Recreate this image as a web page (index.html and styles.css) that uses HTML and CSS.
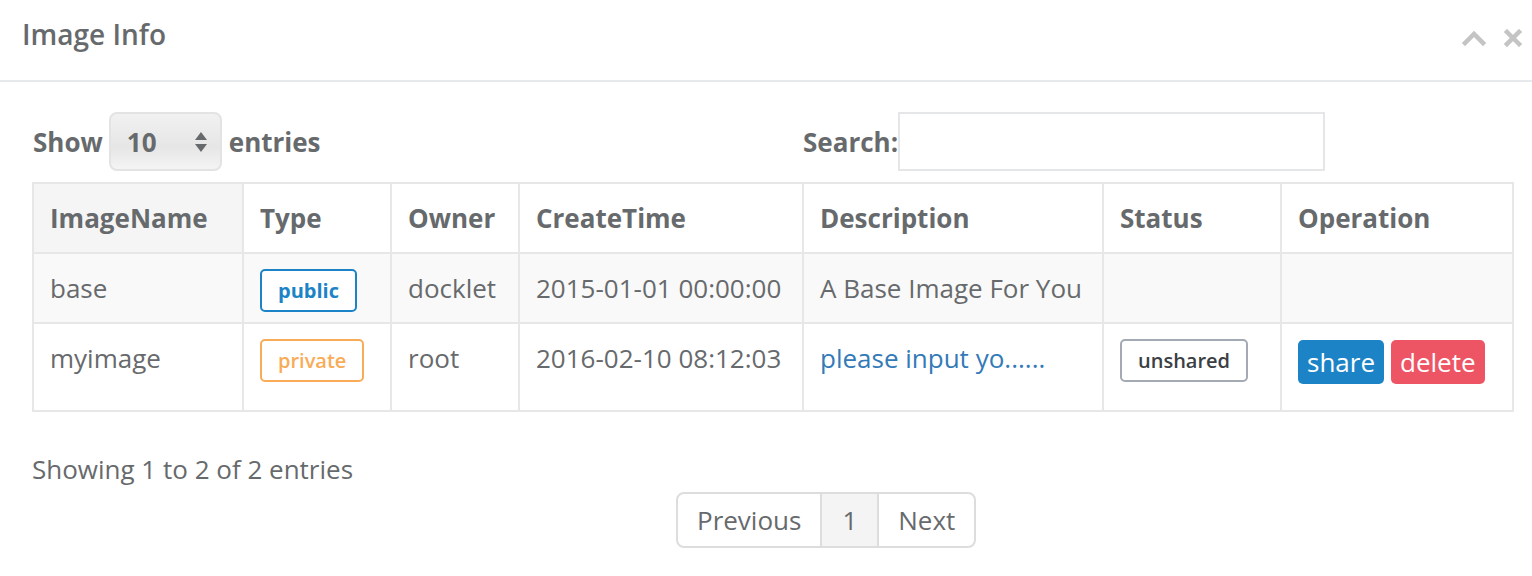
FILE: index.html
```html
<!DOCTYPE html>
<html>
<head>
<meta charset="utf-8">
<link rel="stylesheet" href="styles.css">
</head>
<body>
<div class="ibox">
  <div class="ibox-title">
    <h5>Image Info</h5>
    <div class="tools">
      <svg class="ico" width="24" height="16" viewBox="0 0 24 16"><path d="M3 13 L12 4 L21 13" fill="none" stroke="#c4c4c4" stroke-width="4.5" stroke-linecap="square"/></svg>
      <svg class="ico" width="18" height="18" viewBox="0 0 18 18"><path d="M3 3 L15 15 M15 3 L3 15" fill="none" stroke="#c4c4c4" stroke-width="4.5" stroke-linecap="square"/></svg>
    </div>
  </div>
  <div class="ibox-content">
    <div class="controls">
      <div class="length">
        <span class="lbl">Show</span>
        <div class="select"><span>10</span>
          <svg width="14" height="22" viewBox="0 0 14 22"><path d="M7 1 L13 9 L1 9 Z M7 21 L13 13 L1 13 Z" fill="#676a6c"/></svg>
        </div>
        <span class="lbl">entries</span>
      </div>
      <div class="filter">
        <span class="lbl">Search:</span>
        <div class="input"></div>
      </div>
    </div>
    <table>
      <colgroup>
        <col style="width:210px"><col style="width:148px"><col style="width:128px"><col style="width:284px"><col style="width:300px"><col style="width:178px"><col style="width:232px">
      </colgroup>
      <thead>
        <tr><th class="sorted">ImageName</th><th>Type</th><th>Owner</th><th>CreateTime</th><th>Description</th><th>Status</th><th>Operation</th></tr>
      </thead>
      <tbody>
        <tr class="odd"><td>base</td><td><span class="label l-public">public</span></td><td>docklet</td><td>2015-01-01 00:00:00</td><td>A Base Image For You</td><td></td><td></td></tr>
        <tr class="last"><td>myimage</td><td><span class="label l-private">private</span></td><td>root</td><td>2016-02-10 08:12:03</td><td><a class="link">please input yo......</a></td><td><span class="label l-unshared">unshared</span></td><td class="ops"><span class="btn b-share">share</span><span class="btn b-delete">delete</span></td></tr>
      </tbody>
    </table>
    <div class="info">Showing 1 to 2 of 2 entries</div>
    <div class="paging">
      <div class="pagination">
        <span class="pg">Previous</span><span class="pg active">1</span><span class="pg">Next</span>
      </div>
    </div>
  </div>
</div>
</body>
</html>
```
FILE: styles.css
```css
* { box-sizing: border-box; }
html, body { margin: 0; padding: 0; background: #fff; }
body {
  font-family: "Open Sans", "Liberation Sans", sans-serif;
  font-size: 26px;
  color: #676a6c;
  width: 1532px;
  height: 576px;
  overflow: hidden;
}
.ibox-title {
  height: 82px;
  border-bottom: 2px solid #e7eaec;
  display: flex;
  justify-content: space-between;
  align-items: flex-start;
  padding: 15px 10px 0 22px;
}
.ibox-title h5 {
  margin: 0;
  font-size: 28px;
  font-weight: 600;
  line-height: 38px;
  color: #676a6c;
}
.tools { display: flex; gap: 18px; align-items: center; padding-top: 14px; }
.ibox-content { padding: 30px 19px 0 32px; }
.controls {
  display: grid;
  grid-template-columns: 741px 740px;
  height: 59px;
  margin-bottom: 11px;
  padding-left: 1px;
}
.length, .filter { display: flex; align-items: center; }
.lbl { font-weight: 700; font-size: 26px; }
.length .select {
  width: 113px; height: 59px;
  margin: 0 7px 0 6px;
  border: 2px solid #e3e3e3;
  border-radius: 8px;
  background: linear-gradient(#f1f1f1, #e6e6e6 60%, #f4f4f4);
  display: flex; align-items: center; justify-content: space-between;
  padding: 0 12px 0 16px;
  font-weight: 700;
}
.filter { padding-left: 29px; }
.filter .input {
  width: 427px; height: 59px;
  border: 2px solid #e5e6e7;
  margin-left: 0;
}
table {
  border-collapse: collapse;
  table-layout: fixed;
  width: 1481px;
}
th, td {
  border: 2px solid #e7e7e7;
  padding: 16px 16px;
  line-height: 36px;
  text-align: left;
  vertical-align: top;
  white-space: nowrap;
}
th { font-weight: 700; }
th.sorted { background: #f5f5f5; }
tr.odd td { background: #f9f9f9; }
tr.last td { height: 88px; }
.label {
  display: inline-block;
  vertical-align: top;
  border: 2px solid;
  border-radius: 5px;
  font-size: 20px;
  font-weight: 700;
  line-height: 20px;
  padding: 10px 16px 9px;
  margin: -1px 0 -9px;
  background: #fff;
}
.l-public { color: #1c84c6; border-color: #1c84c6; }
.l-private { color: #f8ac59; border-color: #f8ac59; font-weight: 600; }
.l-unshared { color: #3b3f44; border-color: #a3aab3; font-weight: 600; }
.link { color: #337ab7; }
.ops { padding-top: 16px; }
.btn {
  display: inline-block;
  vertical-align: top;
  color: #fff;
  border-radius: 5px;
  font-size: 26px;
  line-height: 44px;
  height: 44px;
  padding: 0 9px;
  margin-right: 7px;
}
.b-share { background: #1c84c6; }
.b-delete { background: #ed5565; }
.info { margin-top: 39px; line-height: 36px; }
.paging { padding-left: 644px; margin-top: 5px; }
.pagination {
  display: inline-flex;
  border: 2px solid #dddddd;
  border-radius: 8px;
  overflow: hidden;
  height: 56px;
}
.pg {
  display: flex; align-items: center;
  padding: 0 19px;
  color: #676a6c;
}
.pg + .pg { border-left: 2px solid #dddddd; }
.pg.active { background: #f4f4f4; padding: 0 20px; }
```
